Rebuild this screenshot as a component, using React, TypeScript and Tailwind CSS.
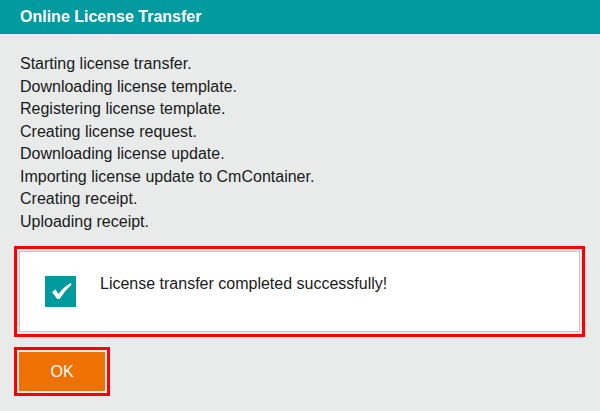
const steps = [
  "Starting license transfer.",
  "Downloading license template.",
  "Registering license template.",
  "Creating license request.",
  "Downloading license update.",
  "Importing license update to CmContainer.",
  "Creating receipt.",
  "Uploading receipt.",
];

export default function App() {
  return (
    <div className="w-[600px] h-[411px] bg-[#e8ebea] text-[#1a1a1a] font-['Liberation_Sans',Arial,sans-serif] overflow-hidden">
      <div className="h-[34px] bg-[#009a9f] px-5 flex items-center">
        <div className="text-white font-bold text-[16px]">Online License Transfer</div>
      </div>

      <div className="pt-[19px] px-5 text-[16px] leading-[22.5px]">
        {steps.map((s) => (
          <div key={s}>{s}</div>
        ))}
      </div>

      <div className="mt-[13px] ml-[14px] w-[571px] border-[3px] border-[#ff0000] p-[2px]">
        <div className="h-[81px] bg-white border border-[#c8c8c8] flex items-start pt-[24px] pl-[25px]">
          <div className="w-[31px] h-[31px] bg-[#009a9f] shrink-0">
            <svg width="31" height="31" viewBox="0 0 31 31">
              <path d="M7 16 L10.5 13.5 L13.5 18 Q18 11.5 25.5 7 L26.5 8.8 Q19.5 15 14.5 23 L12.2 23 Z" fill="white" />
            </svg>
          </div>
          <div className="ml-[24px] text-[16px] leading-[18px] mt-[-1px]">License transfer completed successfully!</div>
        </div>
      </div>

      <div className="mt-[10px] ml-[14px] inline-block border-[3px] border-[#ff0000] p-[2px]">
        <button className="w-[86px] h-[39px] bg-[#ee7203] text-white text-[16px] flex items-center justify-center">
          OK
        </button>
      </div>
    </div>
  );
}
